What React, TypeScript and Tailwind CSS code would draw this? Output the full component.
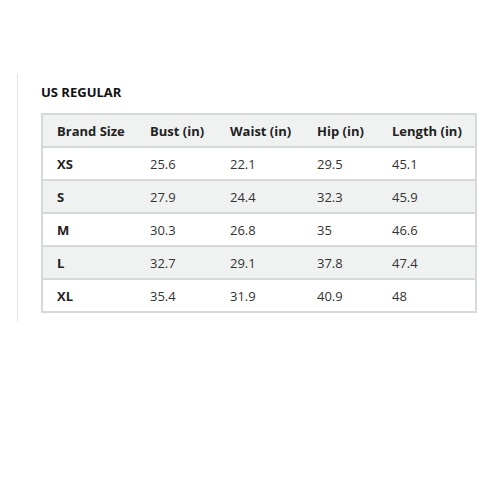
const rows = [
  ["XS", "25.6", "22.1", "29.5", "45.1"],
  ["S", "27.9", "24.4", "32.3", "45.9"],
  ["M", "30.3", "26.8", "35", "46.6"],
  ["L", "32.7", "29.1", "37.8", "47.4"],
  ["XL", "35.4", "31.9", "40.9", "48"],
];

const headers = ["Brand Size", "Bust (in)", "Waist (in)", "Hip (in)", "Length (in)"];
const widths = ["w-[94px]", "w-[80px]", "w-[87px]", "w-[75px]", "w-[98px]"];

export default function App() {
  return (
    <div className="w-[500px] h-[500px] bg-white pt-[74px] pl-[17px] font-['Open_Sans',sans-serif] text-[#333]">
      <div className="h-[248px] border-l border-[#e3e3e3] pl-[23px]">
        <h2 className="text-[13px] font-bold leading-[18px] pt-[9px] text-[#111]">US REGULAR</h2>
        <table className="mt-[12px] w-[435px] table-fixed border-collapse border-2 border-[#d5d9d9] text-[13px] leading-[18px] whitespace-nowrap">
          <thead>
            <tr className="bg-[#f0f2f2]">
              {headers.map((h, i) => (
                <th
                  key={h}
                  className={`${widths[i]} h-[33px] px-[14px] text-left font-bold text-[#222] border-b-2 border-[#d5d9d9]`}
                >
                  {h}
                </th>
              ))}
            </tr>
          </thead>
          <tbody>
            {rows.map((r, ri) => (
              <tr key={r[0]} className={ri % 2 === 1 ? "bg-[#f0f2f2]" : "bg-white"}>
                {r.map((c, ci) => (
                  <td
                    key={ci}
                    className={`h-[33px] px-[14px] border-b-2 border-[#d5d9d9] ${ci === 0 ? "font-bold text-[#222]" : "text-[#333]"}`}
                  >
                    {c}
                  </td>
                ))}
              </tr>
            ))}
          </tbody>
        </table>
      </div>
    </div>
  );
}
